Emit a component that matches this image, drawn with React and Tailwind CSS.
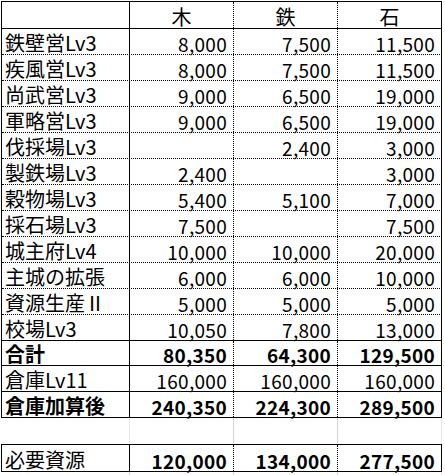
import React from 'react';

const items = [
  ['鉄壁営Lv3', '8,000', '7,500', '11,500'],
  ['疾風営Lv3', '8,000', '7,500', '11,500'],
  ['尚武営Lv3', '9,000', '6,500', '19,000'],
  ['軍略営Lv3', '9,000', '6,500', '19,000'],
  ['伐採場Lv3', '', '2,400', '3,000'],
  ['製鉄場Lv3', '2,400', '', '3,000'],
  ['穀物場Lv3', '5,400', '5,100', '7,000'],
  ['採石場Lv3', '7,500', '', '7,500'],
  ['城主府Lv4', '10,000', '10,000', '20,000'],
  ['主城の拡張', '6,000', '6,000', '10,000'],
  ['資源生産Ⅱ', '5,000', '5,000', '5,000'],
  ['校場Lv3', '10,050', '7,800', '13,000'],
];

const Row = ({ cells, height, bottom, bold, labelBold }) => (
  <div className={`grid grid-cols-[128px_104px_104px_104px] ${height} ${bottom}`}>
    <div
      className={`flex items-end pl-[3px] pb-px border-r border-black text-[20px] leading-none ${
        labelBold ? 'font-bold' : ''
      }`}
    >
      {cells[0]}
    </div>
    {cells.slice(1).map((v, i) => (
      <div
        key={i}
        className={`flex items-end justify-end pr-[6px] pb-px text-[19px] tracking-[0.3px] leading-none border-r border-black ${
          i < 2 ? 'border-dotted' : ''
        } ${bold ? 'font-bold' : ''}`}
      >
        {v}
      </div>
    ))}
  </div>
);

export default function App() {
  return (
    <div className="w-[445px] h-[475px] overflow-hidden bg-white text-black pt-px pl-px font-['Noto_Sans_CJK_JP',sans-serif]">
      {/* main block */}
      <div className="w-[441px] border-l border-t border-black">
        <div className="grid grid-cols-[128px_104px_104px_104px] h-[27px] border-b border-black">
          <div className="border-r border-black" />
          {['木', '鉄', '石'].map((h, i) => (
            <div
              key={h}
              className={`flex items-end justify-center pb-px text-[20px] leading-none border-r border-black ${
                i < 2 ? 'border-dotted' : ''
              }`}
            >
              {h}
            </div>
          ))}
        </div>

        {items.map((r, i) => (
          <Row
            key={r[0]}
            cells={r}
            height="h-[26px]"
            bottom={i < items.length - 1 ? 'border-b border-dotted border-black' : 'border-b border-black'}
          />
        ))}

        <Row cells={['合計', '80,350', '64,300', '129,500']} height="h-[25px]" bottom="border-b border-black" bold labelBold />
        <Row cells={['倉庫Lv11', '160,000', '160,000', '160,000']} height="h-[26px]" bottom="border-b border-black" />
        <Row cells={['倉庫加算後', '240,350', '224,300', '289,500']} height="h-[26px]" bottom="border-b border-black" bold labelBold />
      </div>

      {/* blank spacer row */}
      <div className="grid grid-cols-[129px_104px_104px_104px] h-[26px]">
        <div className="border-r border-gray-200" />
        <div className="border-r border-gray-300" />
        <div className="border-r border-gray-300" />
        <div className="border-r border-gray-200" />
      </div>

      {/* required resources */}
      <div className="w-[441px] border-l border-t border-black">
        <Row cells={['必要資源', '120,000', '134,000', '277,500']} height="h-[27px]" bottom="border-b border-black" bold />
      </div>

      <div className="grid grid-cols-[129px_104px_104px_104px] h-[10px]">
        <div className="border-r border-gray-300" />
        <div className="border-r border-gray-300" />
        <div className="border-r border-gray-300" />
        <div className="border-r border-gray-200" />
      </div>
    </div>
  );
}
